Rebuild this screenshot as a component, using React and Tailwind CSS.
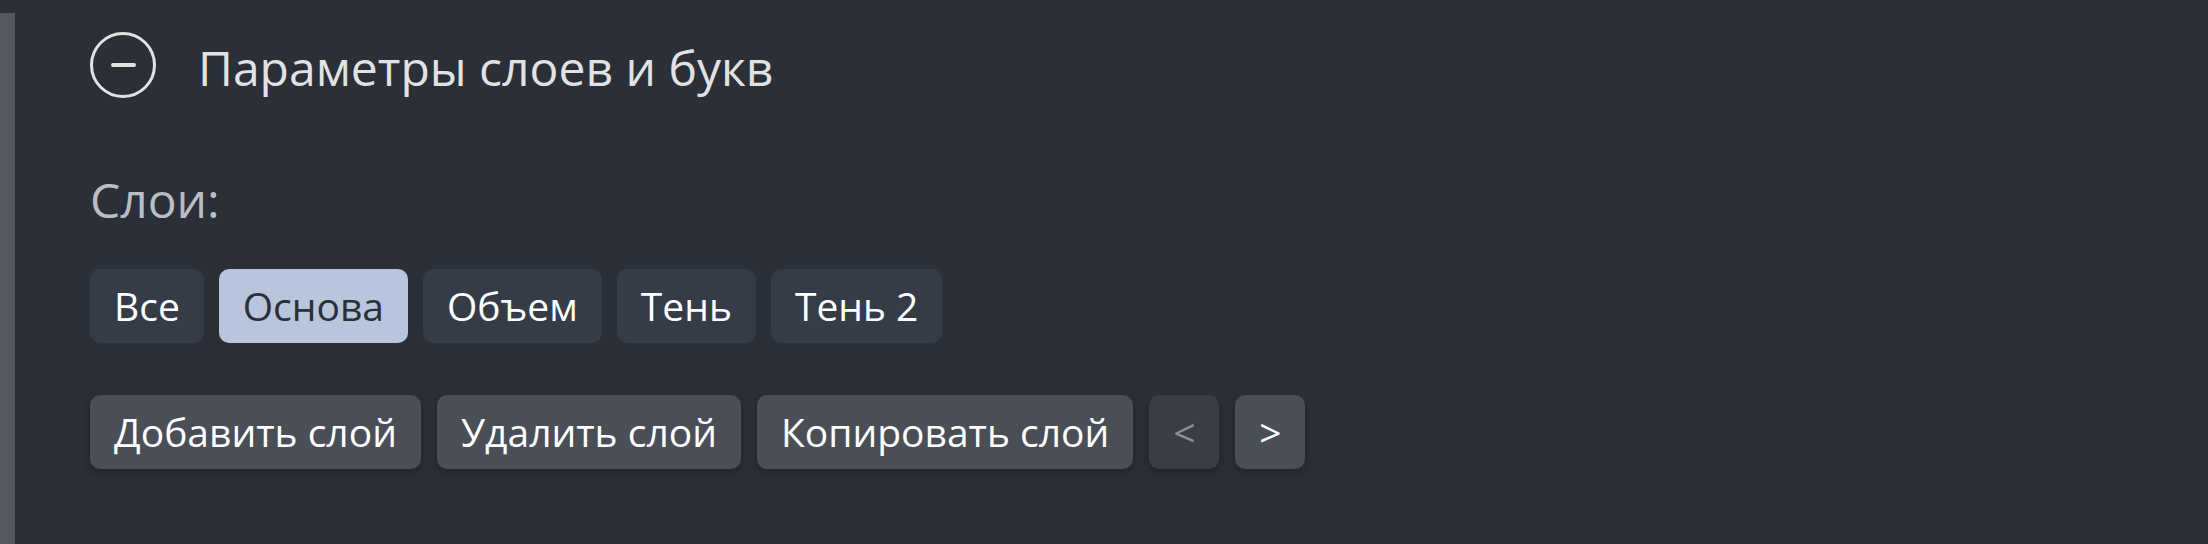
import React, { useState } from 'react';

const layers = ['Все', 'Основа', 'Объем', 'Тень', 'Тень 2'];

const App = () => {
  const [active, setActive] = useState('Основа');

  return (
    <div className="min-h-[544px] bg-[#2a2f38] pt-[13px] font-['Open_Sans',sans-serif]">
      <div className="min-h-[531px] border-l-[15px] border-[#555861] pl-[75px] pt-[19px]">
        {/* section header */}
        <div className="flex items-center">
          <button className="flex h-[66px] w-[66px] items-center justify-center rounded-full border-[3px] border-[#e2e2e2]">
            <span className="block h-[4px] w-[25px] rounded-sm bg-[#e2e2e2]"></span>
          </button>
          <h2 className="ml-[42px] pt-[6px] text-[48px] leading-[48px] font-normal text-[#e2e2e2]">
            Параметры слоев и букв
          </h2>
        </div>

        <div className="mt-[78px] text-[48px] leading-[48px] text-[#b9bdc4]">Слои:</div>

        <div className="mt-[45px] flex gap-[15px]">
          {layers.map((name) => (
            <button
              key={name}
              onClick={() => setActive(name)}
              className={
                active === name
                  ? 'h-[74px] rounded-[10px] bg-[#b8c5dc] px-[24px] pb-[2px] text-[39px] leading-none text-[#2b2f36]'
                  : 'h-[74px] rounded-[10px] bg-[#363c47] px-[24px] pb-[2px] text-[39px] leading-none text-white'
              }
            >
              {name}
            </button>
          ))}
        </div>

        <div className="mt-[52px] flex gap-[16px]">
          <button className="h-[74px] rounded-[10px] bg-[#4a4e56] px-[24px] pb-[2px] text-[39px] leading-none text-white shadow-[0_3px_8px_rgba(0,0,0,0.25)]">
            Добавить слой
          </button>
          <button className="h-[74px] rounded-[10px] bg-[#4a4e56] px-[24px] pb-[2px] text-[39px] leading-none text-white shadow-[0_3px_8px_rgba(0,0,0,0.25)]">
            Удалить слой
          </button>
          <button className="h-[74px] rounded-[10px] bg-[#4a4e56] px-[24px] pb-[2px] text-[39px] leading-none text-white shadow-[0_3px_8px_rgba(0,0,0,0.25)]">
            Копировать слой
          </button>
          <button className="h-[74px] w-[70px] rounded-[10px] bg-[#393d45] pb-[2px] text-[39px] leading-none text-[#8b8f96] shadow-[0_3px_8px_rgba(0,0,0,0.25)]">
            &lt;
          </button>
          <button className="h-[74px] w-[70px] rounded-[10px] bg-[#4a4e56] pb-[2px] text-[39px] leading-none text-white shadow-[0_3px_8px_rgba(0,0,0,0.25)]">
            &gt;
          </button>
        </div>
      </div>
    </div>
  );
};

export default App;
